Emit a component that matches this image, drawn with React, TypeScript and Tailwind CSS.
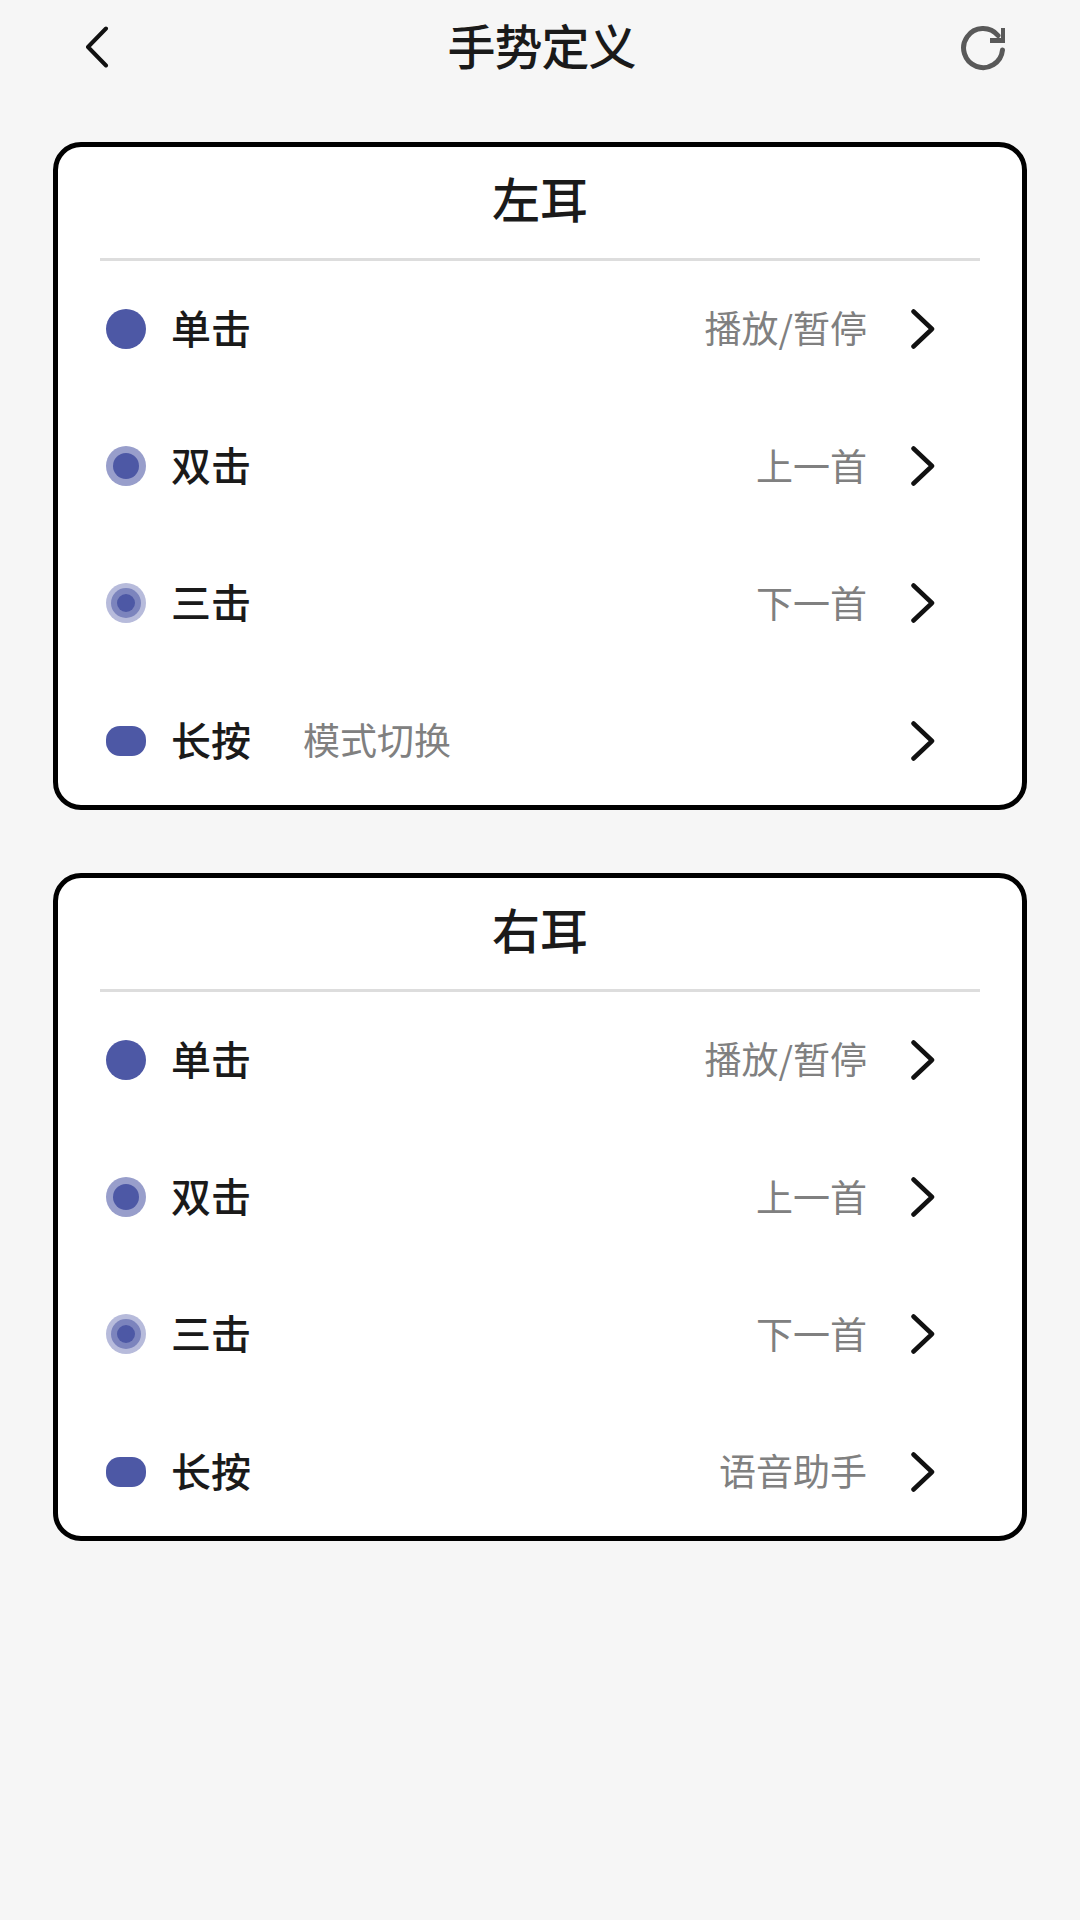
import React from 'react';

type GestureKind = 'single' | 'double' | 'triple' | 'long';

interface GestureRow {
  kind: GestureKind;
  label: string;
  value: string;
  alignLeft?: boolean;
}

const leftEar: GestureRow[] = [
  { kind: 'single', label: '单击', value: '播放/暂停' },
  { kind: 'double', label: '双击', value: '上一首' },
  { kind: 'triple', label: '三击', value: '下一首' },
  { kind: 'long', label: '长按', value: '模式切换', alignLeft: true },
];

const rightEar: GestureRow[] = [
  { kind: 'single', label: '单击', value: '播放/暂停' },
  { kind: 'double', label: '双击', value: '上一首' },
  { kind: 'triple', label: '三击', value: '下一首' },
  { kind: 'long', label: '长按', value: '语音助手' },
];

function GestureDot({ kind }: { kind: GestureKind }) {
  if (kind === 'single') {
    return <div className="w-10 h-10 rounded-full bg-[#4d58a5]" />;
  }
  if (kind === 'double') {
    return (
      <div className="w-10 h-10 rounded-full bg-[#989ecb] flex items-center justify-center">
        <div className="w-[26px] h-[26px] rounded-full bg-[#4d58a5]" />
      </div>
    );
  }
  if (kind === 'triple') {
    return (
      <div className="w-10 h-10 rounded-full bg-[#b7bbdb] flex items-center justify-center">
        <div className="w-[30px] h-[30px] rounded-full bg-[#7c84bd] flex items-center justify-center">
          <div className="w-[18px] h-[18px] rounded-full bg-[#4d58a5]" />
        </div>
      </div>
    );
  }
  return <div className="w-10 h-[30px] rounded-[14px] bg-[#4d58a5]" />;
}

function EarCard({ title, rows }: { title: string; rows: GestureRow[] }) {
  return (
    <section className="h-[668px] overflow-hidden rounded-[28px] border-[5px] border-black bg-white">
      {/* 标题 */}
      <div className="h-[114px] -mb-[1px] mx-[42px] border-b-[3px] border-[#dddddd] flex items-center justify-center pb-[11px]">
        <h2 className="text-[48px] leading-none font-medium text-[#1a1a1a]">{title}</h2>
      </div>

      {rows.map((row) => (
        <div key={row.label} className="h-[137.4px] flex items-center pl-[48px] pr-[87px]">
          <div className="w-10 flex justify-center flex-shrink-0">
            <GestureDot kind={row.kind} />
          </div>
          <span className="ml-[25px] pb-[4px] text-[40px] leading-none font-medium text-[#1a1a1a]">{row.label}</span>
          <span
            className={`pb-[2px] text-[37px] leading-none text-[#808080] ${row.alignLeft ? 'ml-[52px] mr-auto' : 'ml-auto mr-[44px]'}`}
          >
            {row.value}
          </span>
          <svg width="24" height="40" viewBox="0 0 24 40" fill="none" className="flex-shrink-0">
            <path d="M2.5 2.5 L21 20 L2.5 37.5" stroke="#111111" strokeWidth="4.5" strokeLinecap="round" strokeLinejoin="round" />
          </svg>
        </div>
      ))}
    </section>
  );
}

export default function App() {
  return (
    <div
      className="w-[1080px] h-[1920px] bg-[#f6f6f6]"
      style={{ fontFamily: '"Noto Sans CJK SC", "Noto Sans", sans-serif' }}
    >
      {/* 顶部导航 */}
      <header className="h-[94px] grid grid-cols-[1fr_auto_1fr] items-center pl-[84px] pr-[73px]">
        <svg width="26" height="42" viewBox="0 0 26 42" fill="none" className="justify-self-start">
          <path d="M22 2.5 L4 21 L22 39.5" stroke="#111111" strokeWidth="4" strokeLinecap="round" strokeLinejoin="round" />
        </svg>
        <h1 className="mr-[8px] pb-[6px] text-[48px] leading-none font-medium tracking-[-1px] text-[#1a1a1a]">手势定义</h1>
        <svg width="48" height="48" viewBox="0 0 48 48" fill="none" className="justify-self-end">
          <path d="M43.5 27 A19.5 19.5 0 1 1 39 12.5" stroke="#595959" strokeWidth="5" strokeLinecap="round" />
          <path d="M31 15 H42 V5 H46 V20 H31 Z" fill="#595959" />
        </svg>
      </header>

      <main className="mt-[48px] px-[53px] flex flex-col gap-[63px]">
        <EarCard title="左耳" rows={leftEar} />
        <EarCard title="右耳" rows={rightEar} />
      </main>
    </div>
  );
}
